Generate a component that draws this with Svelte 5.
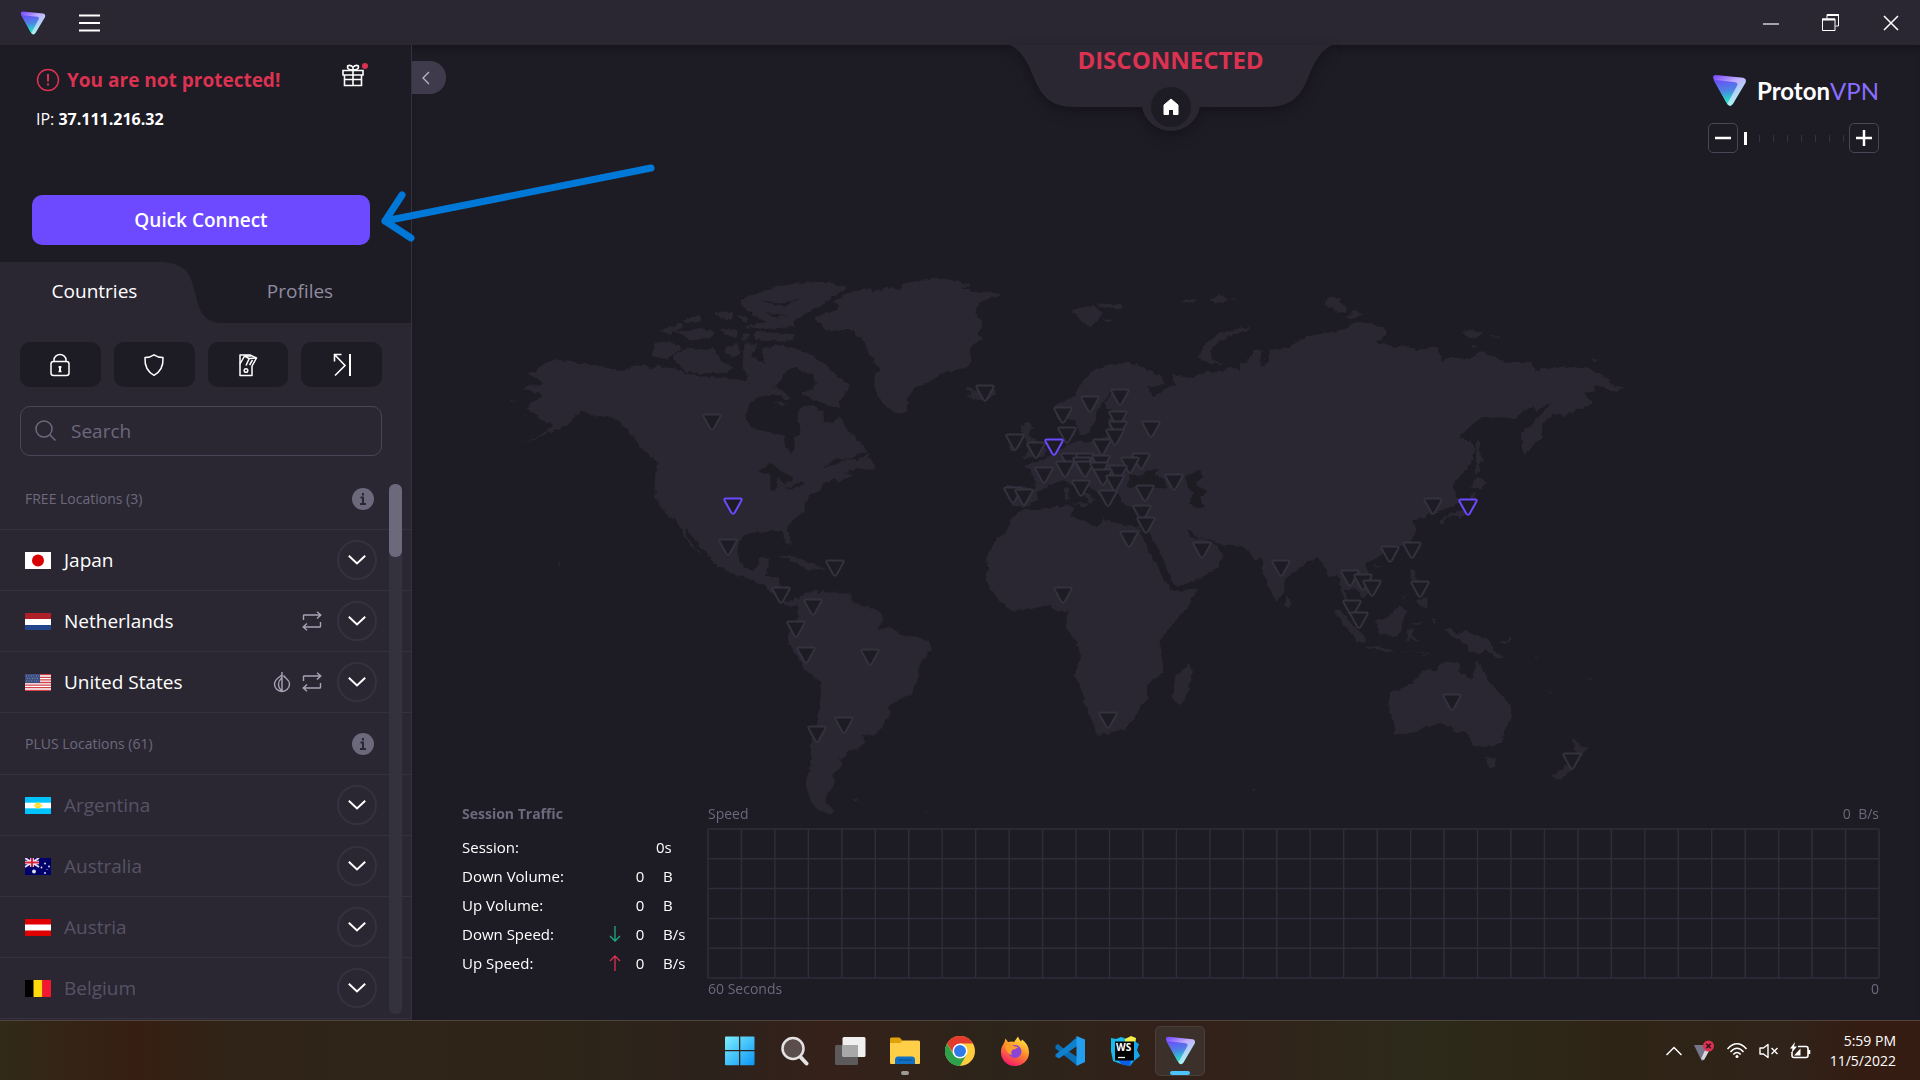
<script>
  let search = $state('');
  let zoom = $state(0);
  let tab = $state('countries');

  const groups = [
    {
      title: 'FREE Locations (3)',
      locked: false,
      countries: [
        { name: 'Japan', flag: 'jp' },
        { name: 'Netherlands', flag: 'nl', p2p: true },
        { name: 'United States', flag: 'us', p2p: true, tor: true }
      ]
    },
    {
      title: 'PLUS Locations (61)',
      locked: true,
      countries: [
        { name: 'Argentina', flag: 'ar' },
        { name: 'Australia', flag: 'au' },
        { name: 'Austria', flag: 'at' },
        { name: 'Belgium', flag: 'be' }
      ]
    }
  ];

  const stats = [
    { label: 'Down Volume:', value: 0, unit: 'B' },
    { label: 'Up Volume:', value: 0, unit: 'B' },
    { label: 'Down Speed:', value: 0, unit: 'B/s', dir: 'down' },
    { label: 'Up Speed:', value: 0, unit: 'B/s', dir: 'up' }
  ];

  // server pins, free ones are drawn in purple on top
  const pins = [
    [985, 393], [1120, 397], [1090, 404], [1063, 415], [1118, 419], [712, 422], [1118, 429], [1151, 429],
    [1067, 435], [1115, 437], [1015, 442], [1102, 447], [1036, 450], [1070, 461], [1085, 461], [1141, 461],
    [1101, 463], [1082, 465], [1130, 465], [1065, 469], [1085, 469], [1099, 470], [1118, 473], [1044, 475],
    [1103, 477], [1174, 482], [1115, 483], [1081, 488], [1145, 493], [1013, 495], [1024, 497], [1108, 498],
    [1433, 506], [1142, 513], [1146, 525], [1129, 539], [728, 547], [1202, 550], [1412, 550], [1390, 554],
    [835, 568], [1281, 568], [1350, 578], [1363, 582], [1372, 588], [1420, 589], [781, 595], [1063, 595],
    [813, 607], [1352, 608], [1359, 620], [796, 629], [806, 655], [870, 657], [1452, 702], [1108, 720],
    [844, 725], [817, 734], [1572, 761]
  ];
  const freePins = [[733, 506], [1054, 447], [1468, 507]];

  const cols = Array.from({ length: 36 }, (_, i) => (i / 35) * 100);
  const rows = Array.from({ length: 6 }, (_, i) => i * 20);

  function matches(country) {
    return country.name.toLowerCase().includes(search.toLowerCase());
  }
</script>

{#snippet protonMark(size)}
  <svg width={size} height={size} viewBox="0 0 36 36" aria-hidden="true">
    <defs>
      <linearGradient id="markOuter" x1="0" y1="0" x2="0.7" y2="1">
        <stop offset="0" stop-color="#7341ff" />
        <stop offset="0.45" stop-color="#c3b0ff" />
        <stop offset="1" stop-color="#a5fff0" />
      </linearGradient>
      <linearGradient id="markInner" x1="0.3" y1="0" x2="0.5" y2="1">
        <stop offset="0" stop-color="#6851f6" />
        <stop offset="0.5" stop-color="#4c86e4" />
        <stop offset="1" stop-color="#1de9c3" />
      </linearGradient>
    </defs>
    <path fill="url(#markOuter)" d="M4 2 L32 5 Q36 6 34.500 10 L21.500 32 Q19 35.500 16 32.500 L1.500 6 Q0 2 4 2Z" />
    <path fill="url(#markInner)" d="M1.500 7 L24 9.500 Q27.500 10.500 25.500 13.500 L16 31 L14.500 30Z" />
  </svg>
{/snippet}

{#snippet flag(code)}
  <svg class="flag" viewBox="0 0 26 17" aria-hidden="true">
    {#if code === 'jp'}
      <path fill="#fff" d="M0 0h26v17H0z" /><circle cx="13" cy="8.500" r="6" fill="#d80000" />
    {:else if code === 'nl'}
      <path fill="#fff" d="M0 0h26v17H0z" /><path fill="#ae1f28" d="M0 0h26v6H0z" /><path fill="#21468b" d="M0 12h26v5H0z" />
    {:else if code === 'us'}
      <path fill="#fff" d="M0 0h26v17H0z" />
      <path stroke="#cf4049" stroke-width="1.300" d="M0 .7h26M0 3.300h26M0 5.900h26M0 8.500h26M0 11.100h26M0 13.700h26M0 16.300h26" />
      <path fill="#3c4f80" d="M0 0h15v9H0z" />
      <path stroke="#8d98b8" stroke-width=".8" stroke-dasharray="1 1.500" d="M1 2h13M2 4.500h12M1 7h13" />
    {:else if code === 'ar'}
      <path fill="#00c3ff" d="M0 0h26v17H0z" /><path fill="#fff" d="M0 5.700h26v5.600H0z" />
      <circle cx="13" cy="8.500" r="3" fill="#ffd91f" /><path stroke="#ffe35a" stroke-width="2" d="M8.500 8.500h9" />
    {:else if code === 'au'}
      <path fill="#00006b" d="M0 0h26v17H0z" />
      <path stroke="#e8d8ee" stroke-width="2" d="M0 0l14 9M14 0L0 9" />
      <path stroke="#fff" stroke-width="3.500" d="M7 0v9M0 4.500h14" />
      <path stroke="#d8213c" stroke-width="2" d="M7 0v9M0 4.500h14" />
      <g fill="#e4e4f4">
        <circle cx="9" cy="13.500" r="1.900" /><circle cx="20" cy="5.500" r=".9" /><circle cx="24" cy="8.500" r=".9" />
        <circle cx="16.500" cy="9.500" r=".9" /><circle cx="20" cy="15" r=".9" /><circle cx="22" cy="11.500" r=".5" />
      </g>
    {:else if code === 'at'}
      <path fill="#e00000" d="M0 0h26v17H0z" /><path fill="#fff" d="M0 5.500h26v6H0z" />
    {:else}
      <path fill="#000" d="M0 0h9v17H0z" /><path fill="#ffd90c" d="M8.500 0h9v17h-9z" /><path fill="#f31830" d="M17.300 0H26v17h-8.700z" />
    {/if}
  </svg>
{/snippet}

<div class="screen">
  <header class="titlebar">
    <div class="brand">
      {@render protonMark(26)}
      <button class="bare menu" aria-label="Menu">
        <svg width="22" height="18" viewBox="0 0 22 18"><path stroke="#fff" stroke-width="2" d="M0 1.500h21M0 9h21M0 16.500h21" /></svg>
      </button>
    </div>
    <div class="window-buttons">
      <button class="bare" aria-label="Minimize">
        <svg width="18" height="18"><path stroke="#a5a3ab" stroke-width="2" d="M1 10h16" /></svg>
      </button>
      <button class="bare" aria-label="Restore">
        <svg width="18" height="18" fill="none" stroke="#fff">
          <path d="M.5 5h12.500v11.500H.5z" /><path stroke-width="2" d="M0 5.500h13" /><path d="M5 4.500V.5h11.500V12H13.500" /><path stroke-width="2" d="M5 1h12" />
        </svg>
      </button>
      <button class="bare" aria-label="Close">
        <svg width="18" height="18"><path stroke="#fff" stroke-width="1.500" d="M2 2l14 14M16 2L2 16" /></svg>
      </button>
    </div>
  </header>

  <main>
    <aside class="sidebar">
      <section class="status">
        <div class="status-line">
          <svg width="24" height="24" fill="none" stroke="#dc3251" stroke-width="1.500">
            <circle cx="12" cy="12" r="10.500" /><path stroke-width="2" d="M12 6v7.500M12 15.500v2" />
          </svg>
          <strong>You are not protected!</strong>
          <button class="bare gift" aria-label="Special offer">
            <svg width="28" height="26" fill="none" stroke="#fff" stroke-width="1.600">
              <path d="M1 8.500h20v4.500H1zM2.500 13v10.500h17V13M11 8.500v15M3 17.500h16" />
              <path d="M11 8C8 8 5.500 7 5.500 5S9.500 2.500 11 5.500V8zM11 8c3 0 5.500-1 5.500-3S12.500 2.500 11 5.500" />
              <circle cx="23" cy="4" r="3" fill="#dc3251" stroke="none" />
            </svg>
          </button>
        </div>
        <p class="ip">IP: <b>37.111.216.32</b></p>
        <button class="quick">Quick Connect</button>
      </section>

      <nav class="tabs">
        <svg class="tab-shape" viewBox="0 0 240 61" preserveAspectRatio="none" aria-hidden="true">
          <path fill="#2a2733" d="M0 0H160C180 0 189 9 192 20L199 45C203 56 211 61 222 61H0Z" />
        </svg>
        <button class="tab" class:active={tab === 'countries'} onclick={() => (tab = 'countries')}>Countries</button>
        <button class="tab" class:active={tab === 'profiles'} onclick={() => (tab = 'profiles')}>Profiles</button>
      </nav>

      <section class="panel">
        <div class="filters">
          <button aria-label="Secure Core">
            <svg width="22" height="24" fill="none" stroke="#fff" stroke-width="1.500">
              <rect x="2" y="8.500" width="18" height="14" rx="2.500" /><path d="M5 8.500V7a6 5.500 0 0 1 12 0v1.500" />
              <path stroke-width="2" d="M11 13v6" /><path d="M9.500 14h3M9.500 18.500h3" />
            </svg>
          </button>
          <button aria-label="NetShield">
            <svg width="22" height="24" fill="none" stroke="#fff" stroke-width="1.500">
              <path stroke-linejoin="round" d="M11 1.800C8 3.800 5 4.500 2 4.500 1.500 13 4 18.500 11 22.300 18 18.500 20.500 13 20 4.500 17 4.500 14 3.800 11 1.800Z" />
            </svg>
          </button>
          <button aria-label="Kill Switch">
            <svg width="22" height="24" fill="none" stroke="#fff" stroke-width="1.500" stroke-linejoin="round">
              <path d="M3 2h10l6.500 3-4.500 8v9.500H3z" /><path d="M3 11L7.500 3 12 5.500 19 5M7 3h7M9 12.500l3-6.500M12.500 12l3-5" /><circle cx="9" cy="17.500" r="1.800" />
            </svg>
          </button>
          <button aria-label="Port Forwarding">
            <svg width="22" height="24" fill="none" stroke="#fff" stroke-width="1.600">
              <path d="M4 22.500L14 12.500 4 2M3.500 8.500v-7h7" /><path stroke-width="2" d="M19 1v22" />
            </svg>
          </button>
        </div>

        <label class="search">
          <svg width="22" height="22" fill="none" stroke="#6d697d" stroke-width="1.500"><circle cx="9" cy="9" r="8" /><path d="M14.500 14.500l6 6" /></svg>
          <input type="text" placeholder="Search" aria-label="Search" bind:value={search} />
        </label>

        <div class="list">
          {#each groups as group}
            <div class="group-title">
              <span>{group.title}</span>
              <button class="bare" aria-label="About {group.title}">
                <svg width="22" height="22"><circle cx="11" cy="11" r="11" fill="#6d697d" /><path stroke="#2a2733" stroke-width="2" fill="none" d="M8.500 9.500H11V16M8 16h6M11 5v2.500" /></svg>
              </button>
            </div>
            {#each group.countries.filter(matches) as country}
              <div class="country" class:locked={group.locked}>
                {@render flag(country.flag)}
                <span class="name">{country.name}</span>
                {#if country.tor}
                  <svg width="18" height="22" fill="none" stroke="#a7a4b5" stroke-width="1.400">
                    <path d="M9 1v19.500M9 4C5 7 1.500 8.500 1.500 13a7.500 7.500 0 0 0 15 0C16.500 8.500 13 8 10.500 4.500M9 6.500C7.500 8.500 5.500 9.500 5.500 13s1.500 5.500 3.500 6.500" />
                  </svg>
                {/if}
                {#if country.p2p}
                  <svg width="22" height="20" fill="none" stroke="#a7a4b5" stroke-width="1.400">
                    <path d="M2.500 9V4.500Q2.500 4 3.500 4H19.500M16 .7L19.800 4 16 7.500M19.500 11v4.500Q19.500 16 18.500 16H2.500M6 12.500L2.200 16 6 19.300" />
                  </svg>
                {/if}
                <button class="expand" aria-label="Show {country.name} servers">
                  <svg width="18" height="10" fill="none" stroke="#fff" stroke-width="2"><path d="M.8 .8L9 8.500 17.200 .8" /></svg>
                </button>
              </div>
            {/each}
          {/each}
          <div class="scrollbar"><div class="thumb"></div></div>
        </div>
      </section>
    </aside>

    <section class="map-area">
      <svg class="map" viewBox="412 45 1508 975" aria-hidden="true">
        <defs>
          <filter id="coast" x="0" y="0" width="1" height="1">
            <feTurbulence type="fractalNoise" baseFrequency="0.18" numOctaves="2" seed="4" />
            <feDisplacementMap in="SourceGraphic" scale="5" xChannelSelector="R" yChannelSelector="G" />
          </filter>
          <path id="pin" d="M-7 -7.500H7Q9.500 -7.500 8.300 -5.200L1.800 6.500Q0 9 -1.800 6.500L-8.300 -5.200Q-9.500 -7.500 -7 -7.500Z" />
        </defs>
        <g class="land" filter="url(#coast)">
          <!-- North America, Arctic islands, Greenland, Iceland -->
          <g transform="translate(500 260) scale(.33333)">
            <path d="M78 340L108 335 125 313 170 298 210 305 300 318 360 333 385 322 432 312 450 325 478 318 540 330 570 345 620 350 640 352 700 358 735 360 750 340 800 340 830 330 850 345 835 375 812 385 830 380 870 410 865 422 830 405 775 412 750 430 740 455 738 480 760 505 800 515 855 530 858 560 875 578 885 565 880 535 905 515 900 495 890 480 900 440 940 435 970 455 975 485 995 493 1015 468 1050 520 1080 545 1100 575 1050 595 1000 600 965 628 1010 610 1045 598 1075 600 1090 585 1105 582 1130 630 1115 632 1075 625 1030 640 1058 645 1015 668 1005 655 970 670 960 695 930 702 915 730 912 755 870 785 862 800 870 835 873 862 855 840 848 812 820 810 785 818 750 818 725 835 712 860 715 895 730 920 755 928 775 920 780 895 808 895 800 930 798 945 840 955 843 1000 850 1020 868 1022 890 1015 905 1022 895 1035 870 1040 840 1020 790 975 740 952 700 945 640 910 635 895 600 860 565 810 552 798 560 830 585 860 602 885 590 875 560 840 535 790 520 775 500 768 480 735 465 710 463 680 468 620 480 615 430 570 400 530 360 485 330 470 270 465 245 452 220 478 190 500 130 525 60 560 160 500 155 488 120 480 110 465 78 445 90 430 125 412 120 400 65 387 80 375 130 372 100 350Z" />
            <path d="M790 265L830 255 880 262 935 285 990 325 1010 350 1050 372 1035 400 1020 430 1015 448 960 430 905 400 940 385 950 365 935 345 890 325 865 330 830 350 800 320 785 290Z" />
            <path d="M465 245L510 242 545 265 500 298 455 288ZM520 285L560 262 620 270 640 262 660 300 700 320 690 335 600 342 560 335 530 310ZM670 270L710 250 722 280 700 295ZM735 250L775 252 755 290 790 310 830 330 820 350 740 345 725 310ZM483 212L545 188 550 200 510 222ZM525 215L600 205 645 215 640 230 575 242ZM545 180L600 165 600 182 565 190ZM640 155L700 160 695 178 660 175ZM660 205L715 210 710 232 680 228ZM765 215L880 222 880 240 800 244 765 238ZM710 165L750 175 735 190ZM725 222L750 225 745 240 728 238ZM545 348L620 350 615 360 560 356Z" />
            <path d="M722 120L760 105 830 80 900 68 980 65 1045 82 1000 110 960 140 920 160 880 185 885 200 790 208 730 200 800 185 760 165 725 140Z" />
            <path d="M948 170L1010 150 1018 138 998 125 1050 95 1110 85 1120 95 1170 82 1200 90 1210 72 1270 58 1340 56 1415 75 1385 85 1420 95 1480 98 1508 103 1470 115 1435 130 1425 160 1448 185 1435 225 1450 235 1410 260 1415 305 1400 322 1320 342 1290 365 1240 385 1222 420 1218 460 1200 462 1165 450 1140 420 1120 380 1125 345 1140 330 1110 285 1085 235 1050 210 985 212 950 185Z" />
            <path d="M1395 385L1410 380 1425 392 1480 385 1492 395 1470 415 1430 420 1400 408 1415 398ZM832 893L860 884 900 898 940 912 980 928 925 930 895 912 860 893ZM170 905L182 912 178 920ZM25 418L52 422 40 426ZM68 466L85 466 80 472ZM815 425L860 430 850 438Z" />
            <path class="water" d="M775 635L815 610 840 630 875 650 880 660 850 670 835 648 825 690 810 688 812 645ZM855 690L880 675 918 662 890 682ZM775 120L840 128 900 118 850 140ZM800 160L860 165 820 172Z" />
          </g>
          <!-- South America -->
          <g transform="translate(700 540) scale(.3443 .33333)">
            <path d="M270 178L285 180 300 160 340 145 342 165 355 150 375 158 435 158 440 180 465 195 500 205 525 215 533 240 515 272 545 260 585 283 625 287 668 308 672 330 635 375 632 420 612 465 580 478 550 497 552 525 525 570 500 590 468 583 478 608 460 628 430 632 425 652 405 655 412 675 385 710 395 730 370 760 365 785 395 818 370 822 330 800 310 760 308 710 320 690 322 610 340 550 350 470 352 425 308 395 280 345 255 310 255 285 285 235 285 200ZM440 776L465 778 450 785ZM648 808L662 814 655 816Z" />
          </g>
          <!-- Europe, western Asia and Africa -->
          <g transform="translate(960 270) scale(.33333)">
            <path d="M185 720L250 715 330 705 345 715 330 738 375 755 415 770 430 750 500 765 540 770 545 795 580 870 610 925 640 965 712 958 682 1015 635 1065 599 1115 609 1165 612 1205 558 1250 563 1290 540 1305 532 1335 496 1375 449 1390 413 1395 403 1370 372 1300 367 1265 344 1215 361 1165 356 1130 317 1070 323 1025 289 1022 268 1005 212 1018 160 1023 119 995 75 930 85 900 80 860 110 805 140 790 150 750Z" />
            <path d="M690 1180L700 1210 676 1290 656 1305 637 1280 645 1220Z" />
            <path d="M285 405L340 380 370 330 400 300 450 282 510 278 570 300 612 325 615 345 560 350 540 365 500 365 450 365 430 400 405 430 410 450 385 490 360 500 345 450 300 450 285 430ZM330 478L350 482 340 500 320 500Z" />
            <path d="M155 708L160 685 135 655 150 645 225 657 220 615 192 587 245 572 290 545 325 520 355 515 410 512 445 495 448 445 505 438 440 415 435 400 455 365 540 340 560 350 580 380 625 350 645 345 640 312 670 320 700 325 740 305 790 305 800 290 860 310 870 330 855 285 880 240 905 240 920 290 925 300 930 240 990 230 1040 200 1120 185 1300 230 1500 700 1075 860 1030 885 975 925 972 970 950 992 925 950 908 900 905 865 890 870 870 845 850 827 770 822 765 810 715 805 685 780 690 800 760 815 790 860 770 895 700 935 645 950 635 930 600 850 570 790 550 770 545 720 490 705 475 670 460 680 445 705 415 670 370 640 362 645 405 690 390 705 375 680 330 640 310 630 270 645 230 670 235 690 190 715 180 710Z" />
            <path d="M180 470L205 455 220 475 205 490 235 520 265 540 250 560 185 565 205 545 200 520 190 500ZM150 510L175 500 180 530 150 545ZM335 120L400 105 430 130 390 170 365 155ZM410 100L490 105 480 118 430 115ZM430 145L460 150 440 158ZM715 260L740 215 790 185 870 170 860 185 800 200 755 235 755 270 790 285 740 278ZM315 655L325 655 325 690 315 690ZM340 700L385 700 375 712ZM660 92L710 86 700 100ZM745 90L780 75 810 92 770 98ZM815 85L840 86 820 90ZM640 318L665 315 650 350ZM975 980L990 995 988 1010 976 1008Z" />
            <path class="water" d="M500 650L510 610 545 622 560 600 600 598 580 612 610 625 622 655 560 652ZM675 620L720 600 730 620 705 640 740 665 720 680 735 715 705 714 690 700 700 670 680 645ZM905 240L915 280 925 310 905 345 880 345 912 322 900 280ZM925 300L960 310 960 328 945 312ZM970 245L1005 260 1005 282 995 262Z" />
          </g>
          <!-- Siberia, East Asia, Oceania -->
          <g transform="translate(1240 280) scale(.33333)">
            <path d="M0 250L60 260 100 240 150 200 200 170 280 155 320 145 350 125 430 140 445 160 375 210 430 188 450 200 500 198 530 210 590 202 610 245 625 230 690 238 720 215 800 245 870 245 890 278 900 265 970 260 1040 262 1100 295 1115 315 1150 320 1130 340 1070 315 1060 335 1030 338 1060 372 1020 385 975 408 940 402 910 430 905 475 875 500 852 525 842 460 880 430 930 372 915 378 890 395 880 382 850 392 828 418 780 412 720 415 655 470 700 490 705 510 695 550 640 612 612 615 580 650 600 690 575 705 555 670 540 650 520 640 490 660 530 675 505 690 530 750 510 785 440 815 400 840 375 850 385 880 395 930 370 955 345 925 315 930 320 960 345 1010 320 985 305 930 295 885 265 890 255 860 232 830 190 855 135 895 132 940 110 962 85 920 68 870 65 835 50 840 30 815 0 797Z" />
            <path d="M245 70L280 48 300 55 295 70 320 80 318 98 290 95ZM320 115L345 90 370 100 355 112ZM325 140L350 122 375 132 360 150ZM665 160L690 150 735 162 690 178ZM750 165L790 175 760 175ZM695 195L720 198 700 202ZM1052 240L1085 236 1065 245ZM0 150L30 140 20 152ZM708 490L716 480 722 520 732 545 715 550 722 575 708 580ZM690 625L712 592 745 605 720 625ZM695 645L706 638 708 665 690 690 660 718 650 705 620 712 605 740 598 722 630 700 665 690ZM400 855L428 855 412 866ZM510 868L528 870 525 890 535 905 512 895ZM525 965L562 950 562 982 545 980ZM485 955L505 935 490 958ZM280 988L300 990 345 1040 375 1070 375 1090 355 1085 310 1035ZM370 1098L400 1098 465 1112 440 1116ZM470 1114L570 1116 540 1132 555 1119ZM405 1020L440 1015 480 975 500 990 490 1020 475 1070 420 1062ZM500 1050L525 1045 515 1060 535 1085 520 1082 508 1065 508 1090 500 1085ZM505 1032L555 1025 530 1034ZM578 1015L588 1020 580 1040ZM610 1045L635 1045 650 1065 675 1052 745 1078 760 1110 795 1135 765 1130 740 1110 715 1122 690 1115 680 1095 640 1070ZM770 1088L800 1085 810 1070 814 1078 795 1093ZM138 945L152 965 150 982 138 978Z" />
            <path d="M450 1240L520 1210 540 1180 570 1165 585 1175 600 1150 630 1143 662 1150 655 1175 697 1200 712 1137 730 1175 750 1210 780 1240 815 1280 815 1310 795 1350 783 1388 755 1400 700 1395 675 1350 650 1360 635 1340 600 1330 555 1340 530 1355 480 1365 460 1358 465 1335 445 1280ZM735 1435L768 1435 765 1460 750 1465ZM995 1370L1020 1395 1048 1405 1030 1425 1010 1430ZM975 1455L1000 1460 965 1500 935 1490ZM918 1225L940 1243 930 1242ZM1040 1200L1062 1190 1050 1204ZM880 1125L895 1133 888 1134ZM35 1526L50 1530 40 1535Z" />
          </g>
        </g>
        {#each pins as [x, y]}
          <use class="pin" href="#pin" {x} {y} />
        {/each}
        {#each freePins as [x, y]}
          <use class="pin free" href="#pin" {x} {y} />
        {/each}
      </svg>

      <div class="top">
        <button class="collapse" aria-label="Collapse sidebar">
          <svg width="8" height="14" fill="none" stroke="#b9b6c6" stroke-width="1.300"><path d="M7 1L1 7l6 6" /></svg>
        </button>

        <div class="connection">
          <svg class="connection-shape" viewBox="0 0 322 92" aria-hidden="true">
            <path fill="#2a2733" d="M0 0H322C310 6 304 18 298 33C291 50 282 62 258 62H190A29.500 29.500 0 0 1 132 62H64C40 62 31 50 24 33C18 18 12 6 0 0Z" />
            <circle cx="161" cy="62" r="20" fill="#1d1b24" />
            <path fill="#fff" stroke="#fff" stroke-linejoin="round" d="M161 54l7 6v9.500h-4.500v-5h-5v5H154V60z" />
          </svg>
          <span>DISCONNECTED</span>
        </div>

        <div class="logo-zoom">
          <div class="logo">
            {@render protonMark(35)}
            <span>Proton<em>VPN</em></span>
          </div>
          <div class="zoom">
            <button aria-label="Zoom out" onclick={() => (zoom = Math.max(0, zoom - 1))}>
              <svg width="16" height="16"><path stroke="#fff" stroke-width="2.500" d="M0 8h16" /></svg>
            </button>
            <input type="range" min="0" max="7" aria-label="Zoom" bind:value={zoom} />
            <button aria-label="Zoom in" onclick={() => (zoom = Math.min(7, zoom + 1))}>
              <svg width="16" height="16"><path stroke="#fff" stroke-width="2.500" d="M0 8h16M8 0v16" /></svg>
            </button>
          </div>
        </div>
      </div>

      <div class="traffic">
        <div class="stats">
          <h2>Session Traffic</h2>
          <table>
            <tbody>
              <tr><th scope="row">Session:</th><td class="duration" colspan="3">0s</td></tr>
              {#each stats as stat}
                <tr>
                  <th scope="row">{stat.label}</th>
                  <td class="arrow">
                    {#if stat.dir === 'down'}
                      <svg width="12" height="16" fill="none" stroke="#1ea885" stroke-width="1.300"><path d="M6 0v15M1 10l5 5 5-5" /></svg>
                    {:else if stat.dir === 'up'}
                      <svg width="12" height="16" fill="none" stroke="#dc3251" stroke-width="1.300"><path d="M6 16V1M1 6l5-5 5 5" /></svg>
                    {/if}
                  </td>
                  <td class="value">{stat.value}</td>
                  <td class="unit">{stat.unit}</td>
                </tr>
              {/each}
            </tbody>
          </table>
        </div>

        <div class="chart">
          <div class="legend"><span>Speed</span><span>0&nbsp; B/s</span></div>
          <svg class="grid" aria-hidden="true">
            {#each cols as c}<line x1="{c}%" x2="{c}%" y1="0" y2="100%" />{/each}
            {#each rows as r}<line x1="0" x2="100%" y1="{r}%" y2="{r}%" />{/each}
          </svg>
          <div class="legend"><span>60 Seconds</span><span>0</span></div>
        </div>
      </div>
    </section>

    <svg class="pointer" width="280" height="90" viewBox="378 158 280 90" fill="none" stroke="#0078d7" stroke-width="7" stroke-linecap="round" stroke-linejoin="round" aria-hidden="true">
      <path d="M651 168L385 221M402 195L385 221 411 238" />
    </svg>
  </main>

  <footer class="taskbar">
    <div class="apps">
      <button aria-label="Start">
        <svg width="30" height="30">
          <defs><linearGradient id="win" x1="0" y1="0" x2="1" y2="1" ><stop offset="0" stop-color="#7defff" /><stop offset="1" stop-color="#0b95f5" /></linearGradient></defs>
          <path fill="url(#win)" d="M0 1.500Q0 .5 1 .5h13V14H0zM15.300 .5H28.500q1 0 1 1V14H15.300zM0 15.300h14v14H1q-1 0-1-1zM15.300 15.300h14.200v13q0 1-1 1H15.300z" />
        </svg>
      </button>
      <button aria-label="Search">
        <svg width="30" height="30" fill="none" stroke="#e4e2e3" stroke-linecap="round"><path stroke-width="4" d="M20.500 21l6 6.500" /><circle cx="13" cy="12.500" r="10.500" fill="#5b4d49" stroke-width="2.500" /></svg>
      </button>
      <button aria-label="Task view">
        <svg width="32" height="30"><rect x="1" y="9" width="23" height="20" rx="1.500" fill="#5c5a5a" /><rect x="8.500" y="1" width="23" height="20" rx="1.500" fill="#f0f0f0" /><path fill="#a9a8a8" d="M8.500 9H24v12H9.500q-1 0-1-1z" /></svg>
      </button>
      <button class="running" aria-label="File Explorer">
        <svg width="30" height="28">
          <path fill="#e0a20b" d="M0 2q0-1.500 1.500-1.500h8L13 4v6H0z" /><path fill="#ffcf48" d="M0 6h10l3-2.500h15.500Q30 3.500 30 5v21q0 1-1 1H1q-1 0-1-1z" />
          <path fill="#1070c4" d="M5 27v-4q0-3.500 3-3.500h14q3 0 3 3.500v4z" /><path stroke="#0a4a8c" d="M8.500 23h13" />
        </svg>
      </button>
      <button aria-label="Chrome">
        <svg width="30" height="30" viewBox="-15 -15 30 30">
          <circle r="15" fill="#ffcd3c" />
          <path fill="#e33b2e" d="M-13 -7.500A15 15 0 0 1 13 -7.500H0L-6 3.500Z" /><path fill="#2da04c" d="M-13 -7.500A15 15 0 0 0 0 15L6.500 3.800-6.500 3.800Z" />
          <circle r="7.500" fill="#fff" /><circle r="6" fill="#2f7bea" />
        </svg>
      </button>
      <button aria-label="Firefox">
        <svg width="30" height="30">
          <defs><linearGradient id="fox" x1=".8" y1="0" x2=".3" y2="1"><stop offset="0" stop-color="#fff04a" /><stop offset=".45" stop-color="#ff9126" /><stop offset="1" stop-color="#f5156c" /></linearGradient></defs>
          <path fill="url(#fox)" d="M1 16C1 11 3 9 4.500 6L5.500 2.500 8 6q4-1 6 0 3-4 4-5.500 1 3 3 5l1-2Q29.500 9 29 17A14 13.500 0 0 1 1 16Z" />
          <circle cx="15" cy="15.500" r="6.500" fill="#8b44d8" /><path fill="#ff9d2b" d="M5 9q6-1 8 1l5 1q-2 2.500-5 2.500-3 2-1 5.500-6-1-7-10z" />
        </svg>
      </button>
      <button aria-label="Visual Studio Code">
        <svg width="30" height="30">
          <path fill="#0b6fb8" d="M22 .5L9 13 3 8 .5 9.500v3L22 29.500l1-8L13 15z" /><path fill="#0f80cc" d="M.5 18.500L22 2v8L4 22.500 .5 20.500z" /><path fill="#249ff0" d="M21.500 0L30 3.500v22.500L21.500 30z" />
        </svg>
      </button>
      <button aria-label="WebStorm">
        <svg width="30" height="30">
          <path fill="#19b9ea" d="M1 2l5 1 5-2 6 2-1 24-5 1-8-3L1 15z" /><path fill="#f2ee4a" d="M15 3l6-3 5 2-1 8-10-2z" /><path fill="#12a5ee" d="M24 5l5 3-2 6 3 6-6 5-4 5-9-2 2-8z" /><path fill="#0a5de8" d="M8 24h13l-1 6-9-2z" />
          <path d="M5 5.500h19v19H5z" /><text x="6" y="14.500" fill="#fff" font-family="Open Sans, sans-serif" font-size="10" font-weight="700">WS</text><path stroke="#fff" stroke-width="1.300" d="M8 21.500h7" />
        </svg>
      </button>
      <button class="current" aria-label="Proton VPN">{@render protonMark(31)}</button>
    </div>

    <div class="tray">
      <button class="bare" aria-label="Show hidden icons"><svg width="16" height="10" fill="none" stroke="#fff" stroke-width="1.500"><path d="M.5 9L8 1.500 15.500 9" /></svg></button>
      <button class="bare" aria-label="Proton VPN status">
        <svg width="22" height="22"><path fill="#777589" d="M1 5h15v6L9 21.500z" /><path fill="#d8d7df" d="M13 8l3 3-5 9-3-1z" /><circle cx="15.500" cy="6" r="5.500" fill="#dc3251" /><path stroke="#33111b" stroke-width="1.600" d="M13.300 3.800l4.400 4.400M17.700 3.800l-4.400 4.400" /></svg>
      </button>
      <button class="bare" aria-label="Network">
        <svg width="22" height="18" fill="none" stroke="#fff" stroke-width="1.500"><path d="M1.500 7Q11 -3.500 20.500 7M4.500 10Q11 2.500 17.500 10M7.300 12.500Q11 8.500 14.700 12.500" /><circle cx="11" cy="14.500" r="1.500" fill="#fff" stroke="none" /></svg>
      </button>
      <button class="bare" aria-label="Volume muted">
        <svg width="20" height="16" fill="none" stroke="#fff" stroke-width="1.400"><path stroke-linejoin="round" d="M1 5h3.500L9 1.500v13L4.500 11H1z" /><path d="M12.500 5l6 6M18.500 5l-6 6" /></svg>
      </button>
      <button class="bare" aria-label="Battery charging">
        <svg width="22" height="18" fill="none" stroke="#fff" stroke-width="1.600"><path d="M8 4.500h8q2 0 2 2v7q0 2-2 2H4q-2 0-2-2V10M19.500 8v4" /><path fill="#fff" stroke="none" d="M4 13.500L10.500 6.500v7zM5 0L0 6.500h2.500L1.500 11 7 4.500H4z" /></svg>
      </button>
      <div class="clock"><time>5:59 PM</time><time>11/5/2022</time></div>
    </div>
  </footer>
</div>

<style>
  :global(body) {
    background: #1d1b24;
    overflow: hidden;
  }

  .screen {
    display: flex;
    flex-direction: column;
    height: 100vh;
    color: #fff;
    font-family: "Segoe UI", "Open Sans", "Noto Sans", sans-serif;
    font-size: 19px;
  }

  button {
    font: inherit;
    color: inherit;
    border: none;
    padding: 0;
    cursor: pointer;
  }

  svg {
    flex: none;
    display: block;
  }

  .bare {
    background: none;
  }

  .titlebar {
    flex: none;
    display: flex;
    justify-content: space-between;
    align-items: center;
    height: 45px;
    padding: 0 20px;
    background: #2a2733;
  }

  .brand {
    display: flex;
    align-items: center;
    gap: 33px;
  }

  .window-buttons {
    display: flex;
    gap: 42px;
  }

  main {
    position: relative;
    flex: 1;
    min-height: 0;
    display: flex;
  }

  .sidebar {
    flex: none;
    display: flex;
    flex-direction: column;
    width: 411px;
    border-right: 1px solid #35323f;
    overflow: hidden;
  }

  .status {
    padding: 17px 41px 17px 32px;
  }

  .status-line {
    display: flex;
    align-items: center;
    gap: 7px;
    height: 36px;
    padding-left: 4px;
    color: #dc3251;
  }

  .gift {
    margin-left: auto;
    align-self: flex-start;
  }

  .ip {
    margin: 8px 0 63px;
    padding-left: 4px;
    font-size: 16px;
    line-height: 26px;
  }

  .quick {
    width: 100%;
    height: 50px;
    border-radius: 10px;
    background: #6d4aff;
    font-weight: 600;
  }

  .tabs {
    position: relative;
    flex: none;
    display: grid;
    grid-template-columns: 189px 1fr;
    height: 61px;
  }

  .tab-shape {
    position: absolute;
    width: 240px;
    height: 61px;
  }

  .tab {
    position: relative;
    background: none;
    color: #8f8c9f;
    padding-bottom: 4px;
  }

  .tab.active {
    color: #fff;
  }

  .panel {
    flex: 1;
    min-height: 0;
    display: flex;
    flex-direction: column;
    background: #2a2733;
    padding-top: 19px;
  }

  .filters {
    display: grid;
    grid-template-columns: repeat(4, 1fr);
    gap: 13px;
    margin: 0 29px 19px 20px;
  }

  .filters button {
    display: grid;
    place-items: center;
    height: 45px;
    border-radius: 10px;
    background: #1d1b24;
  }

  .search {
    display: flex;
    align-items: center;
    gap: 14px;
    height: 48px;
    margin: 0 29px 12px 20px;
    padding: 0 14px;
    border: 1px solid #4a4658;
    border-radius: 10px;
  }

  .search input {
    flex: 1;
    min-width: 0;
    border: none;
    outline: none;
    padding: 0;
    background: none;
    color: #fff;
    font: inherit;
  }

  .search input::placeholder {
    color: #6d697d;
    opacity: 1;
  }

  .list {
    position: relative;
    flex: 1;
    min-height: 0;
  }

  .group-title,
  .country {
    display: flex;
    align-items: center;
    height: 60px;
    padding: 0 34px 0 25px;
    border-bottom: 1px solid #35323f;
  }

  .group-title {
    justify-content: space-between;
    height: 61px;
    padding-right: 37px;
    color: #6d697d;
    font-size: 14px;
  }

  .country {
    gap: 10px;
  }

  .country.locked {
    color: #575365;
  }

  .flag {
    width: 26px;
    height: 17px;
  }

  .name {
    flex: 1;
    padding-left: 3px;
  }

  .expand {
    display: grid;
    place-items: center;
    width: 40px;
    height: 40px;
    margin-left: 4px;
    border: 2px solid #35323f;
    border-radius: 50%;
    background: none;
  }

  .scrollbar {
    position: absolute;
    top: 16px;
    right: 9px;
    bottom: 6px;
    width: 13px;
    border-radius: 6px;
    background: #35323f;
  }

  .thumb {
    height: 73px;
    border-radius: 6px;
    background: #6d697d;
  }

  .map-area {
    position: relative;
    flex: 1;
    min-width: 0;
    display: flex;
    flex-direction: column;
    justify-content: space-between;
    box-shadow: inset 0 8px 8px -6px #15131b;
  }

  .map {
    position: absolute;
    inset: 0;
    width: 100%;
    height: 100%;
  }

  .land {
    fill: #2a2733;
  }

  .water {
    fill: #1d1b24;
  }

  .pin {
    fill: #1d1b24;
    stroke: #35323f;
    stroke-width: 2;
  }

  .pin.free {
    stroke: #6d4aff;
  }

  .top {
    position: relative;
    display: grid;
    grid-template-columns: 1fr 322px 1fr;
    padding-left: 9px;
  }

  .collapse {
    display: grid;
    place-items: center;
    width: 34px;
    height: 33px;
    margin: 16px 0 0 -9px;
    padding-right: 6px;
    border-radius: 0 16px 16px 0;
    background: #3f3b4c;
  }

  .connection {
    position: relative;
    display: flex;
    justify-content: center;
    height: 92px;
    color: #dc3251;
    font-size: 24px;
    font-weight: 700;
    line-height: 30px;
  }

  .connection-shape {
    position: absolute;
    inset: 0;
    width: 322px;
    height: 92px;
    overflow: visible;
    filter: drop-shadow(0 5px 6px #15131b);
  }

  .connection span {
    position: relative;
  }

  .logo-zoom {
    justify-self: end;
    width: 171px;
    padding: 28px 41px 0 0;
  }

  .logo {
    display: flex;
    justify-content: flex-end;
    align-items: center;
    gap: 10px;
    height: 35px;
    font-family: Lato, sans-serif;
    font-size: 24px;
    font-weight: 700;
  }

  .logo em {
    color: #8a6eff;
    font-style: normal;
    font-weight: 400;
  }

  .zoom {
    display: flex;
    justify-content: space-between;
    align-items: center;
    padding-top: 15px;
  }

  .zoom button {
    display: grid;
    place-items: center;
    width: 30px;
    height: 30px;
    border: 1px solid #4a4658;
    border-radius: 5px;
    background: none;
  }

  .zoom input {
    appearance: none;
    width: 100px;
    height: 14px;
    margin: 0;
    background: repeating-linear-gradient(90deg, #35323f 0 1px, transparent 1px 14px) 1px center / 100% 7px no-repeat;
  }

  .zoom input::-webkit-slider-thumb {
    appearance: none;
    width: 3px;
    height: 13px;
    background: #fff;
  }

  .traffic {
    position: relative;
    display: flex;
    margin: 0 41px 21px 50px;
    font-size: 15px;
  }

  .stats {
    flex: none;
    width: 246px;
  }

  h2 {
    margin: 0 0 8px;
    color: #6d697d;
    font-size: 14px;
    line-height: 20px;
  }

  table {
    border-collapse: collapse;
  }

  tr {
    height: 29px;
  }

  th,
  td {
    padding: 0;
    font-weight: 400;
    text-align: left;
  }

  th {
    width: 140px;
  }

  .duration {
    padding-left: 54px;
  }

  .arrow {
    width: 28px;
    padding-left: 7px;
    box-sizing: border-box;
  }

  .value {
    width: 20px;
    text-align: center;
  }

  .unit {
    padding-left: 13px;
  }

  .chart {
    flex: 1;
    min-width: 0;
    color: #6d697d;
    font-size: 14px;
    line-height: 20px;
  }

  .legend {
    display: flex;
    justify-content: space-between;
  }

  .grid {
    width: 100%;
    height: 149px;
    margin: 5px 0 1px;
    overflow: visible;
    stroke: #302d3a;
    stroke-width: 1.500px;
  }

  .pointer {
    position: absolute;
    top: 113px;
    left: 378px;
  }

  .taskbar {
    position: relative;
    flex: none;
    display: flex;
    justify-content: center;
    align-items: center;
    height: 59px;
    border-top: 1px solid #50443d;
    background: linear-gradient(90deg, #312a19, #371e13 7%, #2f2417 12%, #2e2518 28%, #2c221c 37%, #35211a 43%, #2c241a 52%, #33211a 62%, #2c2a1a 74%, #2e2415 84%, #30231a 93%, #341c12 97%);
  }

  .apps {
    display: flex;
    gap: 5px;
  }

  .apps button {
    position: relative;
    display: grid;
    place-items: center;
    width: 50px;
    height: 50px;
    box-sizing: border-box;
    border-radius: 5px;
    background: none;
  }

  .apps .current {
    border: 1px solid #4a3e38;
    background: #3c302a;
  }

  .running::after,
  .current::after {
    content: "";
    position: absolute;
    bottom: 1px;
    width: 8px;
    height: 4px;
    border-radius: 2px;
    background: #a09a97;
  }

  .apps .current::after {
    bottom: 0;
    width: 20px;
    background: #4cc2ff;
  }

  .tray {
    position: absolute;
    right: 24px;
    display: flex;
    align-items: center;
    gap: 11px;
  }

  .clock {
    display: flex;
    flex-direction: column;
    align-items: flex-end;
    width: 73px;
    font-size: 14px;
    line-height: 20px;
  }
</style>
